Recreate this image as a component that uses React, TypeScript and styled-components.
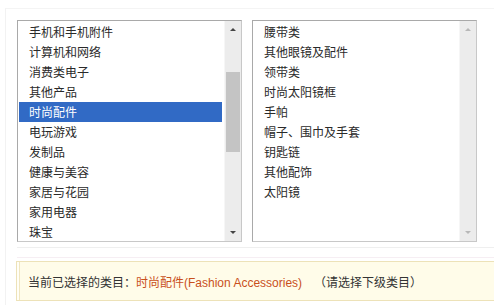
import React from "react";
import styled, { createGlobalStyle } from "styled-components";

const GlobalStyle = createGlobalStyle`
  body {
    margin: 0;
    background: #fff;
    font-family: "Noto Sans CJK SC", "Liberation Sans", sans-serif;
    font-size: 12px;
    color: #333;
  }
`;

const Page = styled.div`
  width: 494px;
  height: 305px;
  overflow: hidden;
  box-sizing: border-box;
  padding: 8px 0 0 5px;
`;

const Frame = styled.div`
  border-left: 1px solid #f2f2f2;
  border-top: 1px solid #f4f4f4;
  padding: 11px 0 0 11px;
  height: 100%;
  box-sizing: border-box;
`;

const Lists = styled.div`
  display: flex;
  gap: 10px;
`;

const ListBox = styled.div`
  width: 225px;
  height: 222px;
  box-sizing: border-box;
  border: 1px solid #a9a9a9;
  border-right-color: #c8c8c8;
  border-bottom-color: #c8c8c8;
  display: flex;
  background: #fff;
`;

const Items = styled.ul`
  flex: 1;
  margin: 0;
  padding: 1px 2px 0 1px;
  list-style: none;
  overflow: hidden;
`;

const Item = styled.li<{ $selected?: boolean }>`
  height: 20px;
  line-height: 20px;
  padding-left: 10px;
  white-space: nowrap;
  font-size: 12px;
  color: ${({ $selected }) => ($selected ? "#fff" : "#2a2a2a")};
  background: ${({ $selected }) => ($selected ? "#316ac5" : "transparent")};
`;

const ScrollBar = styled.div`
  width: 16px;
  background: #ececec;
  border-left: 1px solid #f6f6f6;
  display: flex;
  flex-direction: column;
`;

const Arrow = styled.div<{ $down?: boolean; $disabled?: boolean }>`
  height: 17px;
  display: flex;
  align-items: center;
  justify-content: center;
  &::after {
    content: "";
    border-left: 3px solid transparent;
    border-right: 3px solid transparent;
    ${({ $down, $disabled }) =>
      $down
        ? `border-top: 3px solid ${$disabled ? "#b8b8b8" : "#444"};`
        : `border-bottom: 3px solid ${$disabled ? "#b8b8b8" : "#444"};`}
  }
`;

const Track = styled.div`
  flex: 1;
  position: relative;
`;

const Thumb = styled.div<{ $top: number; $height: number }>`
  position: absolute;
  left: 1px;
  right: 1px;
  top: ${({ $top }) => $top}px;
  height: ${({ $height }) => $height}px;
  background: #c4c4c4;
`;

const Gap = styled.div`
  margin: 5px 0 0 0;
  border-top: 1px solid #efefef;
  height: 9px;
  border-bottom: 1px solid #f6eef3;
`;

const Notice = styled.div`
  margin: 3px 0 0 -1px;
  height: 40px;
  box-sizing: border-box;
  background: #fffce9;
  border: 1px solid #ede2b8;
  border-right: none;
  box-shadow: inset 2px 0 0 #fffef6, inset 3px 0 0 #f0e6c2;
  display: flex;
  align-items: center;
  padding-left: 11px;
  font-size: 12px;
  color: #333;
  white-space: nowrap;
`;

const Highlight = styled.span`
  color: #c9501c;
  font-family: "Liberation Sans", "Noto Sans CJK SC", sans-serif;
  font-size: 12px;
`;

const Hint = styled.span`
  margin-left: 12px;
`;

const leftItems = [
  "手机和手机附件",
  "计算机和网络",
  "消费类电子",
  "其他产品",
  "时尚配件",
  "电玩游戏",
  "发制品",
  "健康与美容",
  "家居与花园",
  "家用电器",
  "珠宝",
];

const rightItems = [
  "腰带类",
  "其他眼镜及配件",
  "领带类",
  "时尚太阳镜框",
  "手帕",
  "帽子、围巾及手套",
  "钥匙链",
  "其他配饰",
  "太阳镜",
];

export default function App() {
  return (
    <>
      <GlobalStyle />
      <Page>
        <Frame>
          <Lists>
            <ListBox>
              <Items>
                {leftItems.map((name) => (
                  <Item key={name} $selected={name === "时尚配件"}>
                    {name}
                  </Item>
                ))}
              </Items>
              <ScrollBar>
                <Arrow />
                <Track>
                  <Thumb $top={34} $height={80} />
                </Track>
                <Arrow $down />
              </ScrollBar>
            </ListBox>
            <ListBox>
              <Items>
                {rightItems.map((name) => (
                  <Item key={name}>{name}</Item>
                ))}
              </Items>
              <ScrollBar>
                <Arrow $disabled />
                <Track />
                <Arrow $down $disabled />
              </ScrollBar>
            </ListBox>
          </Lists>
          <Gap />
          <Notice>
            当前已选择的类目：
            <Highlight>
              <span lang="zh">时尚配件</span>(Fashion Accessories)
            </Highlight>
            <Hint>（请选择下级类目）</Hint>
          </Notice>
        </Frame>
      </Page>
    </>
  );
}
